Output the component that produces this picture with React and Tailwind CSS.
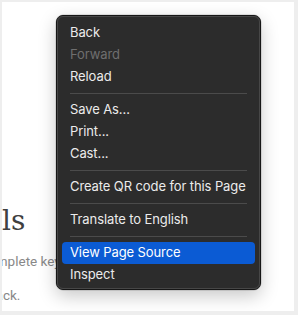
import React from "react";

const items = [
  { t: "Back" },
  { t: "Forward", disabled: true },
  { t: "Reload" },
  { sep: true },
  { t: "Save As..." },
  { t: "Print..." },
  { t: "Cast..." },
  { sep: true },
  { t: "Create QR code for this Page" },
  { sep: true },
  { t: "Translate to English" },
  { sep: true },
  { t: "View Page Source", active: true },
  { t: "Inspect" },
];

export default function App() {
  return (
    <div className="w-[298px] h-[315px] bg-[#eeeeee] pt-[2px] pl-[2px]">
      <div className="relative w-[292px] h-[309px] bg-white overflow-hidden">
        <div className="pt-[203px]">
          <div
            className="text-[28px] leading-[32px] text-[#404040] whitespace-nowrap"
            style={{ fontFamily: '"DejaVu Serif", serif' }}
          >
            ls
          </div>
          <div
            className="mt-[14px] -ml-[21px] text-[13.5px] leading-[20px] text-[#888888] whitespace-nowrap"
            style={{ fontFamily: 'Roboto, "Noto Sans", sans-serif' }}
          >
            complete keyboard shortcuts list
          </div>
          <div
            className="mt-[14px] -ml-[14px] text-[13.5px] leading-[20px] text-[#888888] whitespace-nowrap"
            style={{ fontFamily: 'Roboto, "Noto Sans", sans-serif' }}
          >
            back.
          </div>
        </div>

        <div
          className="absolute left-[54px] top-[13px] w-[205px] rounded-[7px] bg-[#2c2c2c] border border-[#161616] pt-[6px] pb-[3px] shadow-[0_0_0_0.5px_rgba(0,0,0,0.2),0_6px_18px_rgba(0,0,0,0.22)]"
          style={{ fontFamily: 'Inter, "Noto Sans", sans-serif' }}
        >
          <div className="absolute inset-0 rounded-[6px] border border-[#474747] pointer-events-none" />
          {items.map((it, i) =>
            it.sep ? (
              <div key={i} className="h-[11px] flex items-center mx-[13px]">
                <div className="h-px w-full bg-[#4b4b4b]" />
              </div>
            ) : (
              <div
                key={i}
                className={
                  "h-[22px] mx-[5px] px-[8px] flex items-center rounded-[4px] text-[13px] tracking-[-0.1px] whitespace-nowrap " +
                  (it.active
                    ? "bg-[#0b5bd4] text-white"
                    : it.disabled
                    ? "text-[#6f6f6f]"
                    : "text-[#ebebeb]")
                }
              >
                {it.t}
              </div>
            )
          )}
        </div>
      </div>
    </div>
  );
}
